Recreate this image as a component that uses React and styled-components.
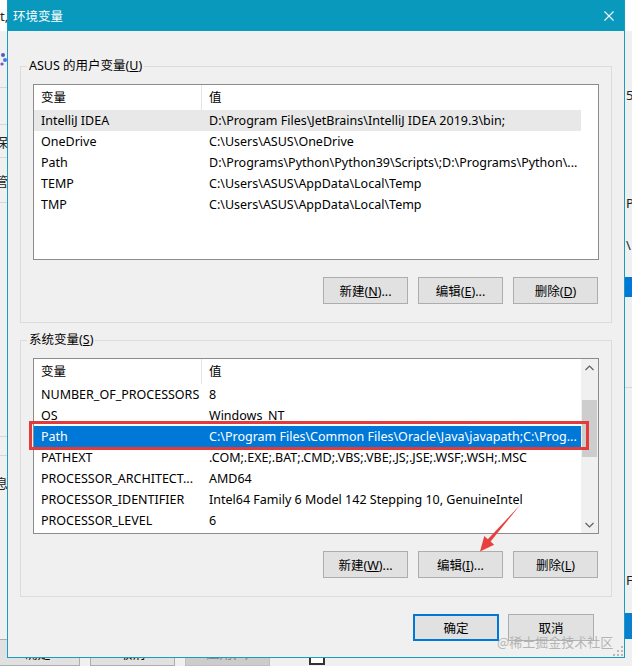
import React from "react";
import styled, { createGlobalStyle, css } from "styled-components";

const UI = `"Noto Sans", "Noto Sans CJK SC", sans-serif`;

const GlobalStyle = createGlobalStyle`
  html, body { margin: 0; padding: 0; background: #f0f0f0; overflow: hidden; }
  body { font-family: ${UI}; font-size: 12.5px; color: #000; }
  #root { width: 632px; height: 666px; }
`;

const Desktop = styled.div`
  position: relative;
  width: 632px;
  height: 666px;
  overflow: hidden;
  background: #f0f0f0;
`;

/* ---------- window behind the dialog ---------- */
const BackWindow = styled.div`
  position: absolute;
  inset: 0;
  display: flex;
  flex-direction: column;
  overflow: hidden;
  background: #f0f0f0;
`;
const BackMain = styled.div`
  flex: 1;
  min-height: 0;
  display: flex;
  justify-content: space-between;
`;
const BackSide = styled.div`
  width: ${(p) => p.$w}px;
  display: flex;
  flex-direction: column;
  overflow: hidden;
  ${(p) => p.$right && css`border-left: 1px solid #8fa9b8;`}
`;
const BackCell = styled.div`
  flex: 0 0 ${(p) => p.$h}px;
  display: flex;
  align-items: center;
  box-sizing: border-box;
  padding-left: ${(p) => p.$indent || 0}px;
  background: ${(p) => p.$bg || "transparent"};
  border-bottom: ${(p) => (p.$line ? "1px solid #d6d6d6" : "none")};
  font-size: 13px;
  white-space: nowrap;
  color: #222;
`;
const BackText = styled.span`
  margin-left: ${(p) => (p.$shift ? -5 : 0)}px;
`;
const BackBar = styled.div`
  flex: 0 0 14px;
  display: flex;
  align-items: flex-start;
  gap: 10px;
  margin-left: -5px;
`;
const BackButton = styled.div`
  flex: 0 0 85px;
  height: 27px;
  box-sizing: border-box;
  border: 1px solid ${(p) => (p.$disabled ? "#bfbfbf" : "#adadad")};
  background: ${(p) => (p.$disabled ? "#cccccc" : "#e1e1e1")};
  color: ${(p) => (p.$disabled ? "#8a8a8a" : "#000")};
  display: flex;
  align-items: center;
  justify-content: center;
  font-size: 13px;
`;
const BackCheck = styled.div`
  width: 16px;
  height: 16px;
  margin: 10px 0 0 29px;
  box-sizing: border-box;
  border: 2px solid #333;
  background: #fff;
`;

/* ---------- dialog ---------- */
const Dialog = styled.div`
  position: absolute;
  left: 7px;
  top: 0;
  width: 618px;
  height: 658px;
  box-sizing: border-box;
  border: 1px solid #1a9cc2;
  border-top: none;
  background: #f0f0f0;
  display: flex;
  flex-direction: column;
`;
const TitleBar = styled.div`
  flex: 0 0 31px;
  display: flex;
  align-items: center;
  background: #0899bd;
  color: #fff;
`;
const Title = styled.div`
  flex: 1;
  padding-left: 5px;
  font-size: 12.5px;
  font-family: "Noto Sans CJK SC", sans-serif;
`;
const CloseBox = styled.div`
  width: 30px;
  height: 31px;
  display: flex;
  align-items: center;
  justify-content: center;
`;
const Body = styled.div`
  flex: 1;
  display: flex;
  flex-direction: column;
  padding: 26px 12px 0;
`;
const Group = styled.fieldset`
  margin: ${(p) => (p.$first ? "0" : "8px")} 0 0;
  padding: 9px 12px 18px;
  border: 1px solid #dcdcdc;
  min-width: 0;
`;
const GroupLabel = styled.legend`
  padding: 0 2px;
  margin-left: -6px;
  line-height: 18px;
`;
const ListBox = styled.div`
  height: 176px;
  box-sizing: border-box;
  border: 1px solid #8c8c8c;
  background: #fff;
  display: flex;
`;
const ListBody = styled.div`
  flex: 1;
  min-width: 0;
  display: flex;
  flex-direction: column;
`;
const HeaderRow = styled.div`
  display: grid;
  grid-template-columns: 168px 1fr;
  height: 25px;
`;
const HeaderCell = styled.div`
  padding-left: 7px;
  line-height: 25px;
  border-right: ${(p) => (p.$divider ? "1px solid #e5e5e5" : "none")};
`;
const Row = styled.div`
  position: relative;
  display: grid;
  grid-template-columns: 168px 1fr;
  height: 21px;
  line-height: 21px;
  ${(p) =>
    p.$state === "hover" &&
    css`
      background: #e8e8e8;
    `}
  ${(p) =>
    p.$state === "selected" &&
    css`
      background: #0078d7;
      color: #fff;
    `}
`;
const Cell = styled.div`
  padding-left: 7px;
  white-space: nowrap;
  overflow: hidden;
  ${(p) =>
    p.$value &&
    css`
      text-overflow: ellipsis;
    `}
`;
const Annotation = styled.div`
  position: absolute;
  left: -5px;
  right: -8px;
  top: -5px;
  bottom: -3px;
  border: 3px solid #e23b3b;
  z-index: 2;
  pointer-events: none;
`;
const Gutter = styled.div`
  flex: 0 0 17px;
  display: flex;
  flex-direction: column;
  background: ${(p) => (p.$track ? "#f0f0f0" : "#fff")};
`;
const ScrollButton = styled.div`
  flex: 0 0 17px;
  display: flex;
  align-items: center;
  justify-content: center;
`;
const Track = styled.div`
  flex: 1;
`;
const Thumb = styled.div`
  margin: 0 1px;
  background: #cdcdcd;
`;
const ButtonRow = styled.div`
  display: flex;
  justify-content: flex-end;
  gap: 10px;
  margin-top: 17px;
  margin-right: 1px;
`;
const Button = styled.button`
  width: ${(p) => p.$w || 85}px;
  height: 27px;
  box-sizing: border-box;
  padding: 0;
  background: #e1e1e1;
  border: 1px solid #adadad;
  font-family: ${UI};
  font-size: 12.5px;
  color: #000;
  ${(p) =>
    p.$default &&
    css`
      border: 2px solid #0078d7;
    `}
`;
const Footer = styled.div`
  display: flex;
  justify-content: flex-end;
  gap: 9px;
  margin-top: 17px;
  padding-right: 18px;
`;
const Grip = styled.svg`
  position: absolute;
  right: 1px;
  bottom: 1px;
`;
const Watermark = styled.div`
  position: absolute;
  left: 497px;
  top: 632px;
  font-family: "Noto Sans CJK SC", sans-serif;
  font-size: 13px;
  color: #b4b4b4;
  white-space: nowrap;
`;
const Arrow = styled.svg`
  position: absolute;
  left: 470px;
  top: 500px;
`;

const userVars = [
  ["IntelliJ IDEA", "D:\\Program Files\\JetBrains\\IntelliJ IDEA 2019.3\\bin;", "hover"],
  ["OneDrive", "C:\\Users\\ASUS\\OneDrive"],
  ["Path", "D:\\Programs\\Python\\Python39\\Scripts\\;D:\\Programs\\Python\\..."],
  ["TEMP", "C:\\Users\\ASUS\\AppData\\Local\\Temp"],
  ["TMP", "C:\\Users\\ASUS\\AppData\\Local\\Temp"],
];

const sysVars = [
  ["NUMBER_OF_PROCESSORS", "8"],
  ["OS", "Windows_NT"],
  ["Path", "C:\\Program Files\\Common Files\\Oracle\\Java\\javapath;C:\\Prog...", "selected", true],
  ["PATHEXT", ".COM;.EXE;.BAT;.CMD;.VBS;.VBE;.JS;.JSE;.WSF;.WSH;.MSC"],
  ["PROCESSOR_ARCHITECT...", "AMD64"],
  ["PROCESSOR_IDENTIFIER", "Intel64 Family 6 Model 142 Stepping 10, GenuineIntel"],
  ["PROCESSOR_LEVEL", "6"],
];

const leftCells = [
  { h: 31, bg: "#fff", text: "t," },
  { h: 57, icon: true, line: true },
  { h: 37, line: true },
  { h: 33, text: "保", shift: true, line: true },
  { h: 45, text: "管", shift: true, line: true },
  { h: 234, line: true },
  { h: 19, line: true },
  { h: 52, text: "息", shift: true },
];

const rightCells = [
  { h: 31, bg: "#fff" },
  { h: 54 },
  { h: 20, text: "5/" },
  { h: 88 },
  { h: 20, text: "Py" },
  { h: 22 },
  { h: 20, text: "\\" },
  { h: 22 },
  { h: 20, bg: "#0078d7" },
  { h: 91, line: true },
  { h: 182 },
  { h: 20, text: "Fi" },
  { h: 23 },
  { h: 40, bg: "#0a7fcf" },
];

const Chevron = ({ up }) => (
  <svg width="9" height="6" viewBox="0 0 9 6">
    <polyline
      points={up ? "0.5,5 4.5,1 8.5,5" : "0.5,1 4.5,5 8.5,1"}
      fill="none"
      stroke="#606060"
      strokeWidth="1.2"
    />
  </svg>
);

function VarList({ rows, scroll }) {
  return (
    <ListBox>
      <ListBody>
        <HeaderRow>
          <HeaderCell $divider>变量</HeaderCell>
          <HeaderCell>值</HeaderCell>
        </HeaderRow>
        {rows.map(([name, value, state, marked]) => (
          <Row key={name + value} $state={state}>
            <Cell>{name}</Cell>
            <Cell $value>{value}</Cell>
            {marked && <Annotation />}
          </Row>
        ))}
      </ListBody>
      {scroll ? (
        <Gutter $track>
          <ScrollButton>
            <Chevron up />
          </ScrollButton>
          <Track>
            <Thumb style={{ marginTop: scroll.offset, height: scroll.size }} />
          </Track>
          <ScrollButton>
            <Chevron />
          </ScrollButton>
        </Gutter>
      ) : (
        <Gutter />
      )}
    </ListBox>
  );
}

function ActionButtons({ keys }) {
  return (
    <ButtonRow>
      <Button>
        新建(<u>{keys[0]}</u>)...
      </Button>
      <Button>
        编辑(<u>{keys[1]}</u>)...
      </Button>
      <Button>
        删除(<u>{keys[2]}</u>)
      </Button>
    </ButtonRow>
  );
}

export default function App() {
  return (
    <>
      <GlobalStyle />
      <Desktop>
        <BackWindow>
          <BackMain>
            <BackSide $w={8}>
              {leftCells.map((c, i) => (
                <BackCell key={i} $h={c.h} $bg={c.bg} $line={c.line}>
                  {c.icon ? (
                    <svg width="8" height="14" viewBox="0 0 8 14">
                      <circle cx="3" cy="3" r="2" fill="#5b53c9" />
                      <circle cx="5" cy="8" r="2" fill="#3f7fd6" />
                      <circle cx="2" cy="12" r="1.6" fill="#7a4fc4" />
                    </svg>
                  ) : (
                    <BackText $shift={c.shift}>{c.text}</BackText>
                  )}
                </BackCell>
              ))}
            </BackSide>
            <BackSide $w={7} $right>
              {rightCells.map((c, i) => (
                <BackCell key={i} $h={c.h} $bg={c.bg} $line={c.line} $indent={1}>
                  {c.text}
                </BackCell>
              ))}
            </BackSide>
          </BackMain>
          <BackBar>
            <BackButton>确定</BackButton>
            <BackButton>取消</BackButton>
            <BackButton $disabled>应用(A)</BackButton>
            <BackCheck />
          </BackBar>
        </BackWindow>

        <Dialog>
          <TitleBar>
            <Title>环境变量</Title>
            <CloseBox>
              <svg width="10" height="10" viewBox="0 0 10 10">
                <path d="M0.5 0.5 L9.5 9.5 M9.5 0.5 L0.5 9.5" stroke="#fff" strokeWidth="1.1" />
              </svg>
            </CloseBox>
          </TitleBar>
          <Body>
            <Group $first>
              <GroupLabel>
                ASUS 的用户变量(<u>U</u>)
              </GroupLabel>
              <VarList rows={userVars} />
              <ActionButtons keys={["N", "E", "D"]} />
            </Group>
            <Group>
              <GroupLabel>
                系统变量(<u>S</u>)
              </GroupLabel>
              <VarList rows={sysVars} scroll={{ offset: 24, size: 57 }} />
              <ActionButtons keys={["W", "I", "L"]} />
            </Group>
            <Footer>
              <Button $default $w={86}>
                确定
              </Button>
              <Button $w={86}>取消</Button>
            </Footer>
          </Body>
          <Grip width="10" height="10" viewBox="0 0 10 10">
            {[
              [8, 0],
              [4, 4],
              [8, 4],
              [0, 8],
              [4, 8],
              [8, 8],
            ].map(([x, y]) => (
              <rect key={x + "-" + y} x={x} y={y} width="2" height="2" fill="#b8b8b8" />
            ))}
          </Grip>
        </Dialog>

        <Arrow width="60" height="60" viewBox="0 0 60 60">
          <polygon
            points="50.5,4.5 20.6,41.6 24.1,44.7 10,51.5 14.3,36.1 17.8,39.2"
            fill="#e8403f"
          />
        </Arrow>
        <Watermark>@稀土掘金技术社区</Watermark>
      </Desktop>
    </>
  );
}
